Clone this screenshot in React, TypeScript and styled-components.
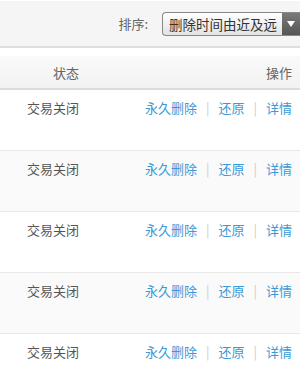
import React from 'react';
import styled, { createGlobalStyle } from 'styled-components';

const GlobalStyle = createGlobalStyle`
  body {
    margin: 0;
    background: #fff;
    font-family: "Noto Sans CJK SC", "Noto Sans", sans-serif;
  }
`;

const rows = [1, 2, 3, 4, 5];

export default function App() {
  return (
    <>
      <GlobalStyle />
      <Page>
        <SortBar>
          <SortLabel>排序:</SortLabel>
          <SelectStyled>
            <SelectText>删除时间由近及远</SelectText>
            <SelectArrow>
              <svg width="8" height="6" viewBox="0 0 8 6">
                <path d="M0 0 L8 0 L4 6 Z" fill="#fff" />
              </svg>
            </SelectArrow>
          </SelectStyled>
        </SortBar>
        <HeaderStyled>
          <HeaderStatus>状态</HeaderStatus>
          <HeaderAction>操作</HeaderAction>
        </HeaderStyled>
        <ListStyled>
          {rows.map((id, index) => (
            <RowStyled key={id} $alt={index % 2 === 1}>
              <StatusStyled>交易关闭</StatusStyled>
              <Actions>
                <LinkStyled>永久删除</LinkStyled>
                <Divider>|</Divider>
                <LinkStyled>还原</LinkStyled>
                <Divider>|</Divider>
                <LinkStyled>详情</LinkStyled>
              </Actions>
            </RowStyled>
          ))}
        </ListStyled>
      </Page>
    </>
  );
}

const Page = styled.div`
  width: 300px;
  display: flex;
  flex-direction: column;
`;

const SortBar = styled.div`
  height: 45px;
  border-top: 1px solid #fff;
  border-bottom: 2px solid #dedede;
  background: #f5f5f5;
  display: flex;
  align-items: center;
  justify-content: flex-end;
`;

const SortLabel = styled.span`
  font-size: 13px;
  color: #666;
  margin-right: 14px;
`;

const SelectStyled = styled.div`
  width: 137px;
  height: 22px;
  display: flex;
  border: 1px solid #888;
  border-right: none;
  border-radius: 4px 0 0 4px;
  background: linear-gradient(#ffffff, #e2e2e2);
  overflow: hidden;
`;

const SelectText = styled.span`
  flex: 1;
  font-size: 13.5px;
  line-height: 22px;
  color: #333;
  padding-left: 6px;
  white-space: nowrap;
  overflow: hidden;
`;

const SelectArrow = styled.span`
  width: 18px;
  flex: none;
  display: flex;
  align-items: center;
  justify-content: center;
  background: linear-gradient(#7a7a7a, #555);
`;

const HeaderStyled = styled.div`
  margin-top: 8px;
  height: 32px;
  border-bottom: 2px solid #dcdcdc;
  background: linear-gradient(#fafafa, #f2f2f2);
  display: flex;
  align-items: center;
  justify-content: space-between;
  font-size: 13px;
  color: #666;
`;

const HeaderStatus = styled.span`
  padding-left: 53px;
`;

const HeaderAction = styled.span`
  padding-right: 8px;
`;

const ListStyled = styled.div`
  display: flex;
  flex-direction: column;
`;

const RowStyled = styled.div<{ $alt: boolean }>`
  height: 61px;
  box-sizing: border-box;
  padding-top: 8px;
  border-bottom: 1px solid #e8e8e8;
  background: ${(p) => (p.$alt ? '#fafafa' : '#fff')};
  display: flex;
  justify-content: space-between;
  align-items: flex-start;
  font-size: 13px;
  line-height: 20px;
`;

const StatusStyled = styled.span`
  padding-left: 27px;
  color: #555;
`;

const Actions = styled.div`
  display: flex;
  padding-right: 8px;
`;

const LinkStyled = styled.span`
  color: #3a9ad8;
  cursor: pointer;
`;

const Divider = styled.span`
  color: #cccccc;
  margin: 0 9px;
`;
